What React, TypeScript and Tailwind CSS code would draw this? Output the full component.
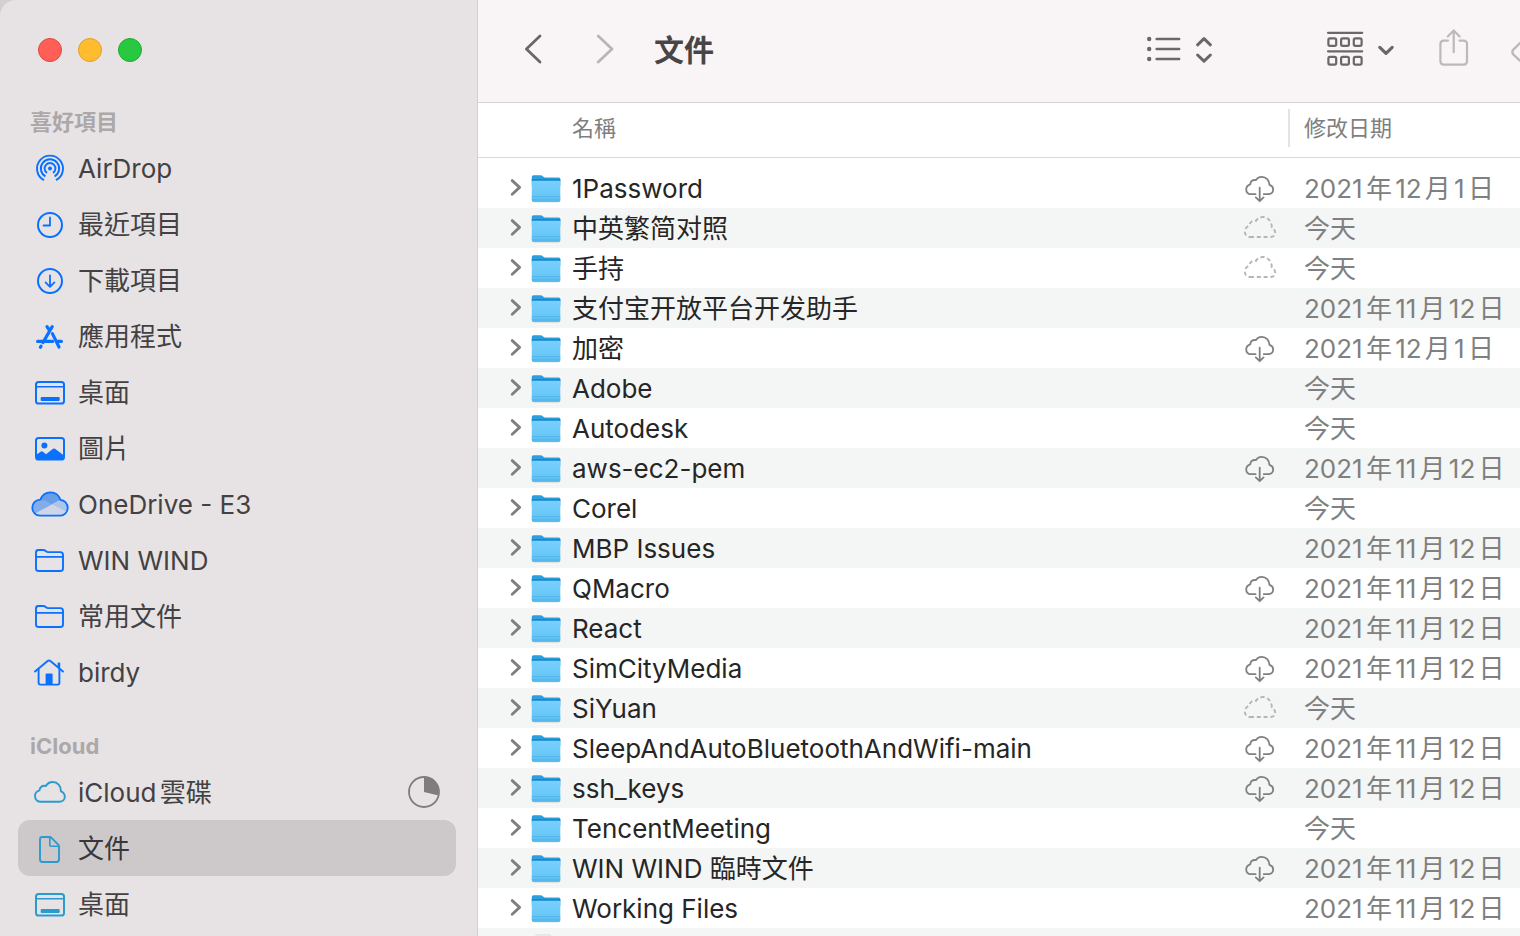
import type { ReactNode } from "react";

type Sync = "download" | "pending" | "local";

const files: { name: string; sync: Sync; date: string }[] = [
  { name: "1Password", sync: "download", date: "2021年12月1日" },
  { name: "中英繁简对照", sync: "pending", date: "今天" },
  { name: "手持", sync: "pending", date: "今天" },
  { name: "支付宝开放平台开发助手", sync: "local", date: "2021年11月12日" },
  { name: "加密", sync: "download", date: "2021年12月1日" },
  { name: "Adobe", sync: "local", date: "今天" },
  { name: "Autodesk", sync: "local", date: "今天" },
  { name: "aws-ec2-pem", sync: "download", date: "2021年11月12日" },
  { name: "Corel", sync: "local", date: "今天" },
  { name: "MBP Issues", sync: "local", date: "2021年11月12日" },
  { name: "QMacro", sync: "download", date: "2021年11月12日" },
  { name: "React", sync: "local", date: "2021年11月12日" },
  { name: "SimCityMedia", sync: "download", date: "2021年11月12日" },
  { name: "SiYuan", sync: "pending", date: "今天" },
  { name: "SleepAndAutoBluetoothAndWifi-main", sync: "download", date: "2021年11月12日" },
  { name: "ssh_keys", sync: "download", date: "2021年11月12日" },
  { name: "TencentMeeting", sync: "local", date: "今天" },
  { name: "WIN WIND 臨時文件", sync: "download", date: "2021年11月12日" },
  { name: "Working Files", sync: "local", date: "2021年11月12日" },
];

function SideIcon({ children }: { children: ReactNode }) {
  return (
    <svg
      viewBox="0 0 40 40"
      className="size-10 shrink-0"
      fill="none"
      stroke="currentColor"
      strokeWidth="2"
      strokeLinecap="round"
      strokeLinejoin="round"
      aria-hidden="true"
    >
      {children}
    </svg>
  );
}

const AirDropIcon = () => (
  <SideIcon>
    <g strokeWidth="1.9" strokeLinecap="butt">
      <path d="M14 32.2A13 13 0 1 1 26 32.2" />
      <path d="M15.4 28.4A9.2 9.2 0 1 1 24.6 28.4" />
      <path d="M17 24.9A5.4 5.4 0 1 1 23 24.9" />
    </g>
    <circle cx="20" cy="20.4" r="2" fill="currentColor" stroke="none" />
  </SideIcon>
);

const ClockIcon = () => (
  <SideIcon>
    <circle cx="20" cy="21" r="12" />
    <path d="M20 13.5V21.5H13.5" strokeWidth="1.8" />
  </SideIcon>
);

const DownloadIcon = () => (
  <SideIcon>
    <circle cx="20" cy="21" r="12" />
    <path d="M20 15.3V26.6M15.6 22.4L20 26.8L24.4 22.4" strokeWidth="1.8" />
  </SideIcon>
);

const AppsIcon = () => (
  <SideIcon>
    <path d="M22.2 10.6L13 26.5M17 10.6L18.6 13.2M22.4 17.6L29 31M11 30.2L10.4 31.2" strokeWidth="3.2" />
    <path d="M7.6 25.4H22.6M27.4 25.4H31.4" strokeWidth="3.2" />
  </SideIcon>
);

const DesktopIcon = () => (
  <SideIcon>
    <rect x="6" y="10" width="28" height="21.5" rx="2.6" />
    <path d="M6 14.8H34" strokeWidth="1.5" />
    <rect x="10.7" y="25" width="19" height="4" rx="1" fill="currentColor" stroke="none" />
  </SideIcon>
);

const PhotoIcon = () => (
  <SideIcon>
    <rect x="6" y="10" width="28" height="21.5" rx="2.6" />
    <circle cx="14.4" cy="17.6" r="3" fill="currentColor" stroke="none" />
    <path
      d="M6 27L11 23.6Q12 23 13 23.8L16 26.2L23 20.8Q24 20 25 20.8L34 27.6V29.5Q34 31.5 32 31.5H8Q6 31.5 6 29.5Z"
      fill="currentColor"
      stroke="none"
    />
  </SideIcon>
);

const OneDriveIcon = () => (
  <SideIcon>
    <path d="M9.5 16.2C11 11.5 15.5 8.3 20.6 8.3C25.8 8.3 29.6 11 31 15.4L21.5 20.8Z" fill="#689ee9" stroke="none" />
    <path d="M9.5 16C5 16.3 2.3 20 2.3 24C2.3 26.5 3.2 28.4 5 29.8L22.3 20.6L14.8 16.6Z" fill="#82ade9" stroke="none" />
    <path d="M22 20.4L30 15.8C34.5 15.8 37.8 19 37.8 23.4C37.8 25 37.3 26.6 36.4 28Z" fill="#adc5e9" stroke="none" />
    <path d="M4.8 29.8L22.2 20.4L36.4 28C35 30 33.2 31.7 30.5 31.7H10Q6.8 31.7 4.8 29.8Z" fill="#cdd5e7" stroke="none" />
    <path d="M10 31.6H30.2C34.4 31.6 37.7 28.1 37.7 23.9C37.7 19.7 34.6 16.2 30.5 16C29.2 11.5 25.3 8.3 20.6 8.3C15.9 8.3 11.9 11.3 10.4 15.6C5.8 15.6 2.3 19.2 2.3 23.7C2.3 28.1 5.7 31.6 10 31.6Z" strokeWidth="1.8" />
  </SideIcon>
);

const FolderLineIcon = () => (
  <SideIcon>
    <path d="M6 29V12.5Q6 10 8.5 10H13.2Q14.5 10 15.4 10.8L16.4 11.6Q17 12.1 18 12.1H30.3Q33 12.1 33 14.8V28.5Q33 31 30.3 31H8.5Q6 31 6 28.5Z" strokeWidth="1.9" />
    <path d="M6 16.8H33" strokeWidth="1.7" />
  </SideIcon>
);

const HomeIcon = () => (
  <SideIcon>
    <path d="M5 19.6L17.6 9Q19 7.9 20.4 9L33 19.6" strokeWidth="1.9" />
    <path d="M8.6 17.4V30.8Q8.6 32.6 10.4 32.6H27.6Q29.4 32.6 29.4 30.8V17.4" strokeWidth="1.9" />
    <path d="M28.9 10.6V16" strokeWidth="2.6" strokeLinecap="butt" />
    <path d="M15.6 32.6V22.4Q15.6 21.4 16.6 21.4H21.6Q22.6 21.4 22.6 22.4V32.6Z" fill="currentColor" stroke="none" />
  </SideIcon>
);

const CloudIcon = () => (
  <SideIcon>
    <path
      d="M11 29.8H29.4C32.4 29.8 34.8 27.6 34.8 24.8C34.8 22.2 33.4 20.4 31 19.4C31 14 27.6 10 22.8 10C19.6 10 17.2 11.7 15.9 14C12.4 12.9 9.7 15.3 9.5 18.4C6.7 19.2 5 21.4 5 24.1C5 27.4 7.6 29.8 11 29.8Z"
      strokeWidth="1.9"
    />
  </SideIcon>
);

const DocumentIcon = () => (
  <SideIcon>
    <path d="M13 9H19.2Q20.6 9 21.5 9.9L28.2 16.7Q29 17.5 29 18.7V31.6Q29 34 26.6 34H12.4Q10 34 10 31.6V11.4Q10 9 12.4 9Z" strokeWidth="1.9" />
    <path d="M19.8 9.5V17.1Q19.8 18.3 21 18.3H28.6" strokeWidth="1.6" />
  </SideIcon>
);

const favourites: [string, () => ReactNode][] = [
  ["AirDrop", AirDropIcon],
  ["最近項目", ClockIcon],
  ["下載項目", DownloadIcon],
  ["應用程式", AppsIcon],
  ["桌面", DesktopIcon],
  ["圖片", PhotoIcon],
  ["OneDrive - E3", OneDriveIcon],
  ["WIN WIND", FolderLineIcon],
  ["常用文件", FolderLineIcon],
  ["birdy", HomeIcon],
];

const cloudItems: [string, () => ReactNode][] = [
  ["iCloud雲碟", CloudIcon],
  ["文件", DocumentIcon],
  ["桌面", DesktopIcon],
];

function SideItem({
  label,
  icon,
  tint,
  selected = false,
  trailing,
}: {
  label: string;
  icon: ReactNode;
  tint: string;
  selected?: boolean;
  trailing?: ReactNode;
}) {
  return (
    <li>
      <a
        href="#"
        aria-current={selected ? "page" : undefined}
        className={`flex h-14 items-center gap-2 rounded-xl pr-4 pl-3 text-[26px] ${selected ? "bg-[#cdc9ca] text-[#393738]" : "text-[#434142]"}`}
      >
        <span className={tint}>{icon}</span>
        <span className="grow pt-0.5 leading-[38px] whitespace-nowrap [text-autospace:normal]">{label}</span>
        {trailing}
      </a>
    </li>
  );
}

function FolderIcon() {
  return (
    <svg viewBox="0 0 32 32" className="size-8 shrink-0" aria-hidden="true">
      <defs>
        <linearGradient id="folder-front" x1="0" y1="0" x2="0" y2="1">
          <stop offset="0" stopColor="#78d0fd" />
          <stop offset="1" stopColor="#62c3f4" />
        </linearGradient>
      </defs>
      <path d="M2 28.5Q2 30.2 3.4 30.2H28.8Q30.3 30.2 30.3 28.5" fill="#000" opacity=".28" />
      <path d="M1.8 4.8Q1.8 3.2 3.4 3.2H10.6Q11.8 3.2 12.6 4L13.4 4.8Q14 5.4 15 5.4H28.8Q30.3 5.4 30.3 6.9V14H1.8Z" fill="#2d9fdf" />
      <path d="M1.8 9.6V7H30.3V9.6Z" fill="#1488d0" />
      <path d="M1.8 10.2Q1.8 8.8 3.2 8.8H28.9Q30.3 8.8 30.3 10.2V28Q30.3 29.4 28.9 29.4H3.2Q1.8 29.4 1.8 28Z" fill="url(#folder-front)" />
      <path d="M1.8 24.6H30.3" stroke="#4fb2e4" strokeWidth=".9" />
      <path d="M1.8 26.4H30.3V28Q30.3 29.4 28.9 29.4H3.2Q1.8 29.4 1.8 28Z" fill="#54b9ec" />
    </svg>
  );
}

function SyncIcon({ sync }: { sync: Sync }) {
  if (sync === "local") return null;
  if (sync === "pending") {
    return (
      <svg viewBox="0 0 36 32" className="h-8 w-9 shrink-0" fill="none" stroke="#b4b5b5" strokeWidth="1.9" role="img" aria-label="等待上傳">
        <path
          d="M8 25H28.4C31.4 25 33.4 23.2 33.2 20.4C33 18 31.6 16.4 29.8 15.4C30 9.4 25.6 5 20.8 5C17.6 5 15.4 6.6 14 8.8C10.6 8 7.6 10 7.4 13.6C4.4 14.8 2.6 17 2.8 20C3 23 5 25 8 25Z"
          strokeDasharray="4 2.8"
        />
      </svg>
    );
  }
  return (
    <svg
      viewBox="0 0 36 32"
      className="h-8 w-9 shrink-0"
      fill="none"
      stroke="#7f8080"
      strokeWidth="1.8"
      strokeLinecap="round"
      strokeLinejoin="round"
      role="img"
      aria-label="下載"
    >
      <path d="M13.6 22.2H8.8C6 22.2 4.2 20.2 4.2 17.6C4.2 15.2 5.8 13.2 8.2 12.4C8.4 9.2 11 7.4 13.8 8.2C15 6 17.2 4.8 19.8 4.8C24.2 4.8 27.4 8.2 27.4 12.8C30 13.6 31.2 15.4 31.2 17.6C31.2 20.2 29.2 22.2 26.4 22.2H21.8" />
      <path d="M17.7 15.6V29M13.8 25.4L17.7 29.2L21.6 25.4" />
    </svg>
  );
}

function Toolbar() {
  return (
    <header className="flex h-[103px] shrink-0 items-center border-b border-[#d6d3d4] bg-[#f9f5f6] pb-1 pl-[46px] text-[#6b6768]">
      <button type="button" aria-label="返回" className="flex">
        <svg viewBox="0 0 20 32" className="h-8 w-5" fill="none" stroke="currentColor" strokeWidth="2.8" strokeLinecap="round" strokeLinejoin="round">
          <path d="M16 3L2.4 16L16 29" />
        </svg>
      </button>
      <button type="button" aria-label="前進" className="ml-[52px] flex text-[#b9b5b6]" disabled>
        <svg viewBox="0 0 20 32" className="h-8 w-5" fill="none" stroke="currentColor" strokeWidth="2.8" strokeLinecap="round" strokeLinejoin="round">
          <path d="M2.2 3L16 16L2.2 29" />
        </svg>
      </button>
      <h1 className="ml-[38px] pt-0.5 text-[30px] font-bold text-[#484546]">文件</h1>

      <div className="ml-auto flex shrink-0 items-center">
        <button type="button" aria-label="顯示方式" className="flex items-center gap-3">
          <svg viewBox="0 0 36 32" className="h-8 w-9" fill="none" stroke="currentColor" strokeWidth="2.4" strokeLinecap="round">
            <path d="M10.6 6H33.2M10.6 16H33.2M10.6 26H33.2" />
            <g fill="currentColor" stroke="none">
              <circle cx="3.2" cy="6" r="2.2" />
              <circle cx="3.2" cy="16" r="2.2" />
              <circle cx="3.2" cy="26" r="2.2" />
            </g>
          </svg>
          <svg viewBox="0 0 20 32" className="h-8 w-5" fill="none" stroke="currentColor" strokeWidth="3" strokeLinecap="round" strokeLinejoin="round">
            <path d="M3.6 11.8L10 5.6L16.4 11.8M3.6 22L10 28.2L16.4 22" />
          </svg>
        </button>
        <button type="button" aria-label="群組" className="ml-28 flex items-center gap-3">
          <svg viewBox="0 0 38 40" className="h-10 w-[38px]" fill="none" stroke="currentColor" strokeWidth="2.2">
            <path d="M2 3.8H36.2M2 22.3H36.2" strokeLinecap="round" />
            <rect x="2.4" y="9.4" width="7.8" height="7.4" rx="1.6" />
            <rect x="15.1" y="9.4" width="7.8" height="7.4" rx="1.6" />
            <rect x="27.8" y="9.4" width="7.8" height="7.4" rx="1.6" />
            <rect x="2.4" y="27.9" width="7.8" height="7.8" rx="1.6" />
            <rect x="15.1" y="27.9" width="7.8" height="7.8" rx="1.6" />
            <rect x="27.8" y="27.9" width="7.8" height="7.8" rx="1.6" />
          </svg>
          <svg viewBox="0 0 20 32" className="h-8 w-5" fill="none" stroke="currentColor" strokeWidth="3.2" strokeLinecap="round" strokeLinejoin="round">
            <path d="M3.8 14.4L10 20.4L16.2 14.4" />
          </svg>
        </button>
        <button type="button" aria-label="分享" className="ml-[42px] flex text-[#bdb9ba]" disabled>
          <svg viewBox="0 0 32 40" className="h-10 w-8" fill="none" stroke="currentColor" strokeWidth="2.2" strokeLinecap="round" strokeLinejoin="round">
            <path d="M10 11.6H5.8Q2.4 11.6 2.4 15V32Q2.4 35.6 5.8 35.6H25.6Q29 35.6 29 32V15Q29 11.6 25.6 11.6H21.4" />
            <path d="M15.7 23.2V2M9.8 7.4L15.7 1.4L21.6 7.4" />
          </svg>
        </button>
        <button type="button" aria-label="標籤" className="ml-10 flex w-[10px] overflow-hidden text-[#bdb9ba]" disabled>
          <svg viewBox="0 0 40 40" className="size-10 shrink-0" fill="none" stroke="currentColor" strokeWidth="2.4" strokeLinejoin="round">
            <path d="M3.4 20.6L17 7.4Q18 6.4 19.6 6.4H30Q34 6.4 34 10V20L19.6 37.4Q18 39 16.4 37.4L3.4 25.6Q1.4 23 3.4 20.6Z" />
          </svg>
        </button>
      </div>
    </header>
  );
}

function FileTable() {
  return (
    <table className="w-full table-fixed border-separate border-spacing-0 text-left text-[26px]">
      <colgroup>
        <col />
        <col className="w-[232px]" />
      </colgroup>
      <thead>
        <tr className="h-[55px] text-[22px] text-[#7f7f7f]">
          <th scope="col" className="border-b border-[#d9d9d9] p-0 pb-1 pl-[94px] font-normal">名稱</th>
          <th scope="col" className="border-b border-[#d9d9d9] p-0 pb-1 font-normal">
            <div className="flex h-[38px] items-center border-l-2 border-[#e3e3e3] pl-[14px]">修改日期</div>
          </th>
        </tr>
      </thead>
      <tbody className="before:block before:h-[10px] before:content-['']">
        {files.map((file) => (
          <tr key={file.name} className="h-10 even:bg-[#f4f5f5]">
            <td className="p-0">
              <div className="flex h-10 items-center pr-[10px] pl-[30px] text-[#262626]">
                <button type="button" aria-label={`展開 ${file.name}`} className="flex">
                  <svg viewBox="0 0 16 20" className="h-5 w-4" fill="none" stroke="#7f7f7f" strokeWidth="2.8" strokeLinecap="round" strokeLinejoin="round">
                    <path d="M4.2 2.6L11.6 9.4L4.2 16.2" />
                  </svg>
                </button>
                <span className="ml-1.5 flex">
                  <FolderIcon />
                </span>
                <span className="ml-2.5 grow truncate pt-0.5 leading-[38px]">{file.name}</span>
                <SyncIcon sync={file.sync} />
              </div>
            </td>
            <td className="truncate p-0 pt-0.5 pl-4 leading-[38px] text-[#7f8080] [text-autospace:normal]">{file.date}</td>
          </tr>
        ))}
        <tr className="h-10 bg-[#f4f5f5]" aria-hidden="true">
          <td className="p-0">
            <div className="flex h-10 items-center pl-[52px]">
              <svg viewBox="0 0 32 32" className="size-8">
                <path d="M6 3H20L27 10V31H6Z" fill="#ffffff" stroke="#d4d4d4" />
              </svg>
            </div>
          </td>
          <td />
        </tr>
      </tbody>
    </table>
  );
}

export default function App() {
  return (
    <div className="flex h-screen overflow-hidden bg-[#d2d0d1] font-['Inter','Noto_Sans_CJK_TC',sans-serif]">
      <aside className="w-[478px] shrink-0 overflow-hidden rounded-tl-[16px] border-r border-[#d3cfd0] bg-[#e7e3e4] pr-[21px] pl-[18px]">
        <div className="flex h-[104px] gap-4 pt-[38px] pl-5">
          <button type="button" aria-label="關閉" className="size-6 rounded-full border border-[#e2463f] bg-[#ff5f57]" />
          <button type="button" aria-label="縮到最小" className="size-6 rounded-full border border-[#e0a028] bg-[#febc2e]" />
          <button type="button" aria-label="縮放" className="size-6 rounded-full border border-[#1eac2e] bg-[#28c840]" />
        </div>
        <nav aria-label="側邊欄">
          <h2 className="h-9 pl-3 text-[22px] leading-9 font-bold text-[#aca8a9]">喜好項目</h2>
          <ul>
            {favourites.map(([label, Icon]) => (
              <SideItem key={label} label={label} icon={<Icon />} tint="text-[#0a71ff]" />
            ))}
          </ul>
          <h2 className="mt-7 h-9 pl-3 text-[22px] leading-9 font-bold text-[#aca8a9]">iCloud</h2>
          <ul>
            {cloudItems.map(([label, Icon], i) => (
              <SideItem
                key={label}
                label={label}
                icon={<Icon />}
                tint="text-[#2a9bcf]"
                selected={i === 1}
                trailing={
                  i === 0 ? (
                    <svg viewBox="0 0 32 32" className="size-8 shrink-0" role="img" aria-label="同步中">
                      <circle cx="16" cy="16" r="15" fill="none" stroke="#807c7d" strokeWidth="1.8" />
                      <path d="M16 16V1A15 15 0 0 1 30.6 19.4Z" fill="#807c7d" />
                    </svg>
                  ) : undefined
                }
              />
            ))}
          </ul>
        </nav>
      </aside>
      <main className="flex min-w-0 grow flex-col overflow-hidden bg-white">
        <Toolbar />
        <FileTable />
      </main>
    </div>
  );
}
